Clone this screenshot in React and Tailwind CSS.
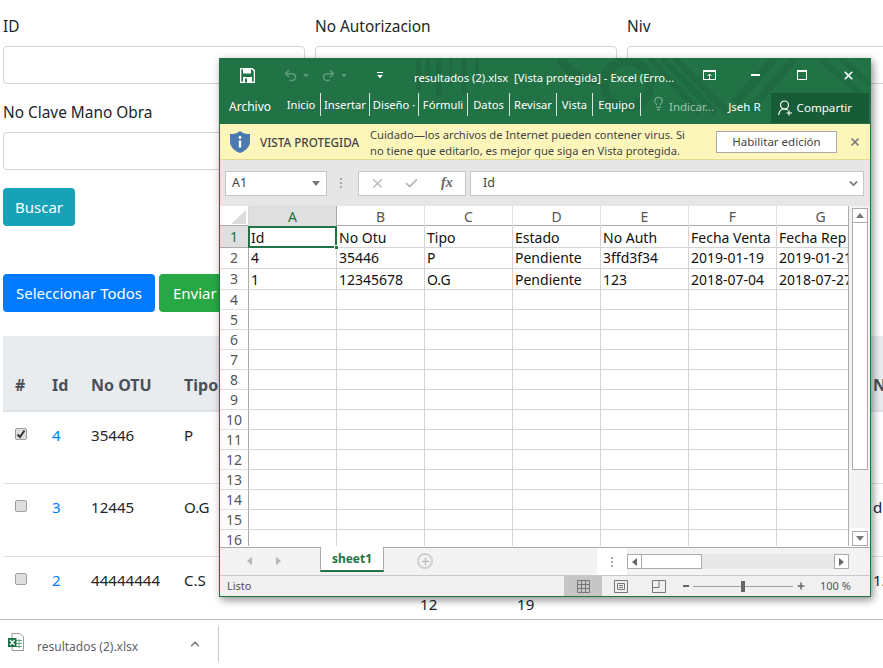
import React from "react";
import { Undo2, Redo2, Lightbulb, X, Check, ChevronUp, ChevronDown, Plus } from "lucide-react";

const cols = ["A", "B", "C", "D", "E", "F", "G"];
const sheet = [
  ["Id", "No Otu", "Tipo", "Estado", "No Auth", "Fecha Venta", "Fecha Rep"],
  ["4", "35446", "P", "Pendiente", "3ffd3f34", "2019-01-19", "2019-01-21"],
  ["1", "12345678", "O.G", "Pendiente", "123", "2018-07-04", "2018-07-27"],
];
const tabs = [
  ["Inicio", "w-[39px]"],
  ["Insertar", "w-[49px]"],
  ["Diseño ·", "w-[49px]"],
  ["Fórmuli", "w-[49px]"],
  ["Datos", "w-[42px]"],
  ["Revisar", "w-[47px]"],
  ["Vista", "w-[36px]"],
  ["Equipo", "w-[48px]"],
];
const rowNums = Array.from({ length: 16 }, (_, i) => i + 1);

function Tri({ dir = "down", className = "" }) {
  const pts = { down: "0,0 8,0 4,5", up: "0,5 8,5 4,0", left: "5,0 5,8 0,4", right: "0,0 0,8 5,4" }[dir];
  const v = dir === "down" || dir === "up";
  return (
    <svg width={v ? 8 : 5} height={v ? 5 : 8} viewBox={v ? "0 0 8 5" : "0 0 5 8"} className={className}>
      <polygon points={pts} fill="currentColor" />
    </svg>
  );
}

function Box({ checked }) {
  return (
    <span className="flex h-[12px] w-[12px] items-center justify-center rounded-[2px] border border-[#a0a0a0] bg-[#dedede]">
      {checked && (
        <svg width="10" height="10" viewBox="0 0 10 10">
          <path d="M1.5 5.5 L4 8 L8.5 1.5" fill="none" stroke="#333" strokeWidth="2" />
        </svg>
      )}
    </span>
  );
}

function TitlePattern() {
  return (
    <svg className="absolute left-0 top-0" width="650" height="66" viewBox="0 0 650 66">
      <g fill="#1f6a41">
        <rect x="196" y="0" width="5" height="32" />
        <rect x="206" y="0" width="4" height="22" />
        <rect x="216" y="0" width="6" height="38" />
        <rect x="229" y="0" width="3" height="28" />
        <rect x="241" y="0" width="6" height="36" />
        <rect x="255" y="0" width="4" height="16" />
      </g>
      <g fill="none" stroke="#1f6a41">
        <circle cx="407" cy="26" r="23" strokeWidth="9" />
        <path d="M430 0 L480 55 M442 0 L495 55 M454 0 L508 55" strokeWidth="6" />
        <path d="M555 0 L515 45 M575 0 L530 52" strokeWidth="8" />
        <path d="M600 0 L650 45 M620 0 L650 26" strokeWidth="6" />
        <path d="M340 0 Q352 22 378 22" strokeWidth="9" />
      </g>
    </svg>
  );
}

function ExcelWindow() {
  return (
    <div
      className="absolute left-[219px] top-[58px] flex h-[539px] w-[652px] flex-col overflow-hidden border-x border-b border-t-0 border-[#217346] bg-white text-[12px] text-[#444] shadow-[2px_3px_8px_rgba(0,0,0,0.45)]"
      style={{ fontFamily: '"Noto Sans", sans-serif' }}
    >
      {/* Title */}
      <div className="relative h-[66px] shrink-0 bg-[#217346] text-white">
        <TitlePattern />
        <div className="relative flex h-[34px] items-center">
          <svg className="ml-[20px]" width="15" height="15" viewBox="0 0 15 15">
            <path d="M0.5 0.5 H12 L14.5 3 V14.5 H0.5 Z" fill="none" stroke="#fff" strokeWidth="1.6" />
            <rect x="3" y="1" width="8" height="4.5" fill="#fff" />
            <rect x="3" y="9" width="9" height="5.5" fill="#fff" />
            <rect x="5" y="10.5" width="2" height="4" fill="#217346" />
          </svg>
          <Undo2 className="ml-[28px] text-[#5d9a79]" size={15} strokeWidth={2.4} />
          <Tri className="ml-[4px] scale-75 text-[#5d9a79]" />
          <Redo2 className="ml-[11px] text-[#5d9a79]" size={15} strokeWidth={2.4} />
          <Tri className="ml-[4px] scale-75 text-[#5d9a79]" />
          <span className="ml-[28px] flex flex-col items-center gap-[1px]">
            <span className="block h-[1px] w-[6px] bg-white" />
            <Tri className="scale-75 text-white" />
          </span>
          <span className="ml-[30px] mt-[5px] whitespace-pre text-[11.2px] text-white">resultados (2).xlsx  [Vista protegida] - Excel (Erro...</span>
          <svg className="ml-[29px]" width="13" height="10" viewBox="0 0 13 10">
            <rect x="0.5" y="0.5" width="12" height="9" fill="none" stroke="#fff" />
            <rect x="0.5" y="0.5" width="12" height="1.5" fill="#fff" />
            <path d="M6.5 9 V4 M4.5 6 L6.5 4 L8.5 6" fill="none" stroke="#fff" />
          </svg>
          <span className="ml-[35px] block h-[2px] w-[9px] bg-white" />
          <span className="ml-[37px] block h-[10px] w-[10px] border border-t-2 border-white" />
          <X className="ml-[35px]" size={13} strokeWidth={3} />
        </div>
        <div className="relative flex h-[32px] items-start">
          <span className="ml-[9px] mt-[3px] w-[53px] text-[12px] font-normal">Archivo</span>
          {tabs.map(([t, w]) => (
            <span key={t} className={`mt-[1px] flex h-[23px] shrink-0 items-center justify-center overflow-hidden whitespace-nowrap border-r border-[#d8e6de] text-[11.2px] ${w}`}>
              {t}
            </span>
          ))}
          <Lightbulb className="ml-[10px] mt-[4px] text-[#9fc3ae]" size={15} strokeWidth={1.4} />
          <span className="ml-[3px] mt-[3px] text-[11.5px] text-[#9fc3ae]">Indicar...</span>
          <span className="ml-[14px] mt-[3px] text-[11.5px]">Jseh R</span>
          <span className="ml-[10px] mt-[1px] flex h-[30px] w-[98px] items-center bg-[#185c37] pb-[1px]">
            <svg className="ml-[7px]" width="15" height="16" viewBox="0 0 15 16">
              <circle cx="6.5" cy="5" r="4" fill="none" stroke="#fff" strokeWidth="1.2" />
              <path d="M0.7 15 C1 11 3.5 9 6.5 9 C8 9 9 9.5 10 10" fill="none" stroke="#fff" strokeWidth="1.2" />
              <path d="M11 10.5 V15.5 M8.5 13 H14" stroke="#fff" strokeWidth="1.2" />
            </svg>
            <span className="ml-[4px] text-[11.6px]">Compartir</span>
          </span>
        </div>
      </div>

      {/* Protected view */}
      <div className="flex h-[36px] shrink-0 items-center border-b border-[#e2dc91] bg-[#fdf6bb]">
        <svg className="ml-[10px]" width="20" height="22" viewBox="0 0 20 22">
          <path d="M10 0 C13 2.5 16 3 20 3 V11 C20 16 15 20 10 22 C5 20 0 16 0 11 V3 C4 3 7 2.5 10 0 Z" fill="#4a7ab0" />
          <circle cx="10" cy="6.5" r="1.4" fill="#fff" />
          <rect x="8.8" y="9.5" width="2.4" height="7" fill="#fff" />
        </svg>
        <span className="ml-[10px] w-[110px] whitespace-nowrap text-[11.7px] font-medium text-[#444]">VISTA PROTEGIDA</span>
        <span className="mt-[2px] w-[346px] text-[11.2px] leading-[16px] text-[#444]">
          Cuidado—los archivos de Internet pueden contener virus. Si
          <br />
          no tiene que editarlo, es mejor que siga en Vista protegida.
        </span>
        <span className="flex h-[22px] w-[121px] items-center justify-center border border-[#ababab] bg-white text-[11.5px] text-[#444]">Habilitar edición</span>
        <X className="ml-[12px] text-[#777]" size={12} strokeWidth={3.2} />
      </div>

      {/* Formula bar */}
      <div className="flex h-[46px] shrink-0 items-center bg-[#e6e6e6]">
        <div className="ml-[5px] flex h-[25px] w-[102px] items-center justify-between border border-[#c6c6c6] bg-white pl-[6px] pr-[6px] text-[12.5px]">
          A1
          <Tri className="text-[#777]" />
        </div>
        <div className="ml-[13px] flex flex-col gap-[2px]">
          <span className="block h-[2px] w-[2px] bg-[#aaa]" />
          <span className="block h-[2px] w-[2px] bg-[#aaa]" />
          <span className="block h-[2px] w-[2px] bg-[#aaa]" />
        </div>
        <div className="ml-[16px] flex h-[25px] w-[108px] items-center border border-[#c6c6c6] bg-white">
          <X className="ml-[11px] text-[#b5b5b5]" size={15} strokeWidth={2} />
          <Check className="ml-[19px] text-[#b5b5b5]" size={15} strokeWidth={2.8} />
          <span className="ml-[22px] text-[14px] font-semibold italic text-[#666]" style={{ fontFamily: '"Liberation Serif", serif' }}>fx</span>
        </div>
        <div className="ml-[4px] flex h-[25px] w-[394px] items-center justify-between border border-[#c6c6c6] bg-white pl-[12px] pr-[3px] text-[12.5px]">
          Id
          <ChevronDown className="text-[#777]" size={13} strokeWidth={3} />
        </div>
      </div>

      {/* Grid + vertical scrollbar */}
      <div className="flex min-h-0 flex-1 bg-white">
        <div className="relative h-[340px] w-[629px] shrink-0 overflow-hidden border-r border-[#ababab]">
          <div className="flex h-[20px] border-b border-[#ababab]">
            <div className="flex h-[20px] w-[29px] shrink-0 items-end justify-end border-r border-[#d4d4d4] pb-[2px] pr-[2px]">
              <svg width="15" height="14" viewBox="0 0 15 14"><polygon points="15,0 15,14 0,14" fill="#dcdcdc" /></svg>
            </div>
            {cols.map((c, i) => (
              <div
                key={c}
                className={`flex h-[20px] w-[88px] shrink-0 items-center justify-center border-r pt-[1px] text-[14px] ${i === 0 ? "border-[#ababab] bg-[#dfdfdf] text-[#217346]" : "border-[#e0e0e0] text-[#555]"}`}
              >
                {c}
              </div>
            ))}
          </div>
          {rowNums.map((n) => {
            const row = sheet[n - 1];
            const h = n === 1 ? "h-[22px]" : n <= 3 ? "h-[21px]" : "h-[20px]";
            const lead = n === 1 ? "leading-[24px]" : n === 3 ? "leading-[22px]" : "leading-[20px]";
            return (
              <div key={n} className={`flex ${h}`}>
                <div className={`flex w-[29px] shrink-0 items-center justify-center border-b border-r border-[#ababab] text-[14px] ${n === 1 ? "bg-[#dfdfdf] text-[#217346]" : "border-b-[#dcdcdc] text-[#555]"}`}>
                  {n}
                </div>
                {cols.map((c, i) => (
                  <div key={c} className={`w-[88px] shrink-0 overflow-hidden whitespace-nowrap border-b border-r border-[#d4d4d4] pl-[2px] text-[14px] text-[#111] ${lead}`}>
                    {row ? row[i] : ""}
                  </div>
                ))}
              </div>
            );
          })}
          <div className="absolute left-[28px] top-[20px] h-[22px] w-[89px] border-2 border-[#217346]" />
          <div className="absolute left-[114px] top-[39px] h-[5px] w-[5px] border border-white bg-[#217346]" />
        </div>
        <div className="flex h-[340px] flex-1 flex-col bg-[#f3f3f3] pl-[3px] pt-[2px]">
          <div className="flex h-[15px] w-[16px] items-center justify-center border border-[#ababab] bg-white text-[#777]">
            <Tri dir="up" />
          </div>
          <div className="h-[247px] w-[16px] border-x border-b border-[#ababab] bg-white" />
          <div className="flex-1" />
          <div className="-ml-[3px] flex h-[18px] w-[20px] items-end justify-start bg-white pl-[3px]">
            <div className="flex h-[15px] w-[16px] items-center justify-center border border-[#ababab] bg-white text-[#777]">
              <Tri />
            </div>
          </div>
        </div>
      </div>

      {/* Sheet tabs */}
      <div className="flex h-[28px] shrink-0 items-start border-t border-[#ababab] bg-[#f3f3f3]">
        <Tri dir="left" className="ml-[27px] mt-[9px] text-[#b5b5b5]" />
        <Tri dir="right" className="ml-[24px] mt-[9px] text-[#b5b5b5]" />
        <div className="-mt-[1px] ml-[39px] flex h-[25px] w-[64px] items-center justify-center border-x border-b-2 border-x-[#ababab] border-b-[#217346] bg-white pt-[1px] text-[12px] font-bold text-[#217346]">
          sheet1
        </div>
        <span className="ml-[33px] mt-[5px] flex h-[16px] w-[16px] items-center justify-center rounded-full border-2 border-[#d0d0d0] text-[#bdbdbd]">
          <Plus size={11} strokeWidth={3} />
        </span>
        <div className="ml-[164px] flex h-[27px] w-[30px] flex-col items-center justify-center gap-[2px] self-start bg-white">
          <span className="block h-[2px] w-[2px] bg-[#aaa]" />
          <span className="block h-[2px] w-[2px] bg-[#aaa]" />
          <span className="block h-[2px] w-[2px] bg-[#aaa]" />
        </div>
        <div className="mt-[6px] flex h-[15px] w-[222px] bg-[#e8e8e8]">
          <div className="flex h-[15px] w-[15px] items-center justify-center border border-[#ababab] bg-white text-[#666]"><Tri dir="left" /></div>
          <div className="h-[15px] w-[60px] border-y border-r border-[#ababab] bg-white" />
          <div className="flex-1" />
          <div className="flex h-[15px] w-[15px] items-center justify-center border border-[#ababab] bg-white text-[#666]"><Tri dir="right" /></div>
        </div>
      </div>

      {/* Status */}
      <div className="flex h-[21px] shrink-0 items-center border-t border-[#c8c8c8] bg-[#f0f0f0] text-[11px] text-[#555]">
        <span className="ml-[7px] w-[337px]">Listo</span>
        <div className="flex h-[21px] w-[38px] items-center justify-center bg-[#c6c6c6]">
          <svg width="13" height="13" viewBox="0 0 13 13">
            <path d="M0.5 0.5 H12.5 V12.5 H0.5 Z M4.5 0.5 V12.5 M8.5 0.5 V12.5 M0.5 4.5 H12.5 M0.5 8.5 H12.5" fill="none" stroke="#777" />
          </svg>
        </div>
        <div className="flex h-[21px] w-[38px] items-center justify-center">
          <svg width="14" height="13" viewBox="0 0 14 13">
            <path d="M0.5 0.5 H13.5 V12.5 H0.5 Z M3.5 3.5 H10.5 V9.5 H3.5 Z M5 5.5 H9 M5 7.5 H9" fill="none" stroke="#777" />
          </svg>
        </div>
        <div className="flex h-[21px] w-[38px] items-center justify-center">
          <svg width="14" height="13" viewBox="0 0 14 13">
            <path d="M0.5 0.5 H13.5 V12.5 H0.5 Z M0.5 7.5 H7 V0.5" fill="none" stroke="#777" />
          </svg>
        </div>
        <span className="ml-[5px] block h-[2px] w-[6px] bg-[#666]" />
        <div className="relative ml-[4px] h-[1px] w-[100px] bg-[#a0a0a0]">
          <span className="absolute left-[48px] -top-[5px] block h-[11px] w-[4px] bg-[#666]" />
        </div>
        <Plus className="ml-[3px] text-[#666]" size={10} strokeWidth={3.5} />
        <span className="ml-[14px] text-[11px]">100 %</span>
      </div>
    </div>
  );
}

const th = "border-b-2 border-[#dee2e6] px-3 pt-3 pb-[13px] text-left align-bottom text-[16px] font-bold text-[#495057]";
const td = "border-b border-[#dee2e6] px-3 pt-[11px] pb-3 align-top text-[15.1px]";

export default function App() {
  const rows = [
    { id: 4, otu: "35446", tipo: "P", checked: true, a: "", b: "", n: "", h: "h-[72px]" },
    { id: 3, otu: "12445", tipo: "O.G", a: "", b: "", n: "d", h: "h-[73px]" },
    { id: 2, otu: "44444444", tipo: "C.S", a: <>2019-02-<br />12</>, b: <>2019-02-<br />19</>, n: "1234", h: "h-[72px]" },
  ];
  return (
    <div className="relative h-[668px] w-[883px] overflow-hidden bg-white text-[16px] leading-[24px] text-[#212529]" style={{ fontFamily: '"Noto Sans", sans-serif' }}>
      <div className="h-[619px] overflow-hidden pl-[3px] pt-[15px]">
        <div className="grid w-[926px] grid-cols-3 gap-x-[10px]">
          {["ID", "No Autorizacion", "Niv", "No Clave Mano Obra"].map((l) => (
            <div key={l} className="mb-[16px] h-[70px]">
              <label className="mb-[7px] block h-[24px] text-[15.4px]">{l}</label>
              <div className="h-[38px] rounded-[4px] border border-[#ced4da] bg-white" />
            </div>
          ))}
        </div>
        <button className="mt-[1px] block h-[38px] w-[72px] rounded-[4px] bg-[#17a2b8] text-[15px] text-white">Buscar</button>
        <div className="mt-[48px] flex gap-[4px]">
          <button className="h-[38px] w-[152px] rounded-[4px] bg-[#007bff] text-[15px] text-white">Seleccionar Todos</button>
          <button className="h-[38px] w-[100px] rounded-[4px] bg-[#28a745] pl-[14px] text-left text-[15px] text-white">Enviar</button>
        </div>
        <table className="mt-[24px] w-[1000px] table-fixed border-collapse">
          <colgroup>
            <col className="w-[37px]" />
            <col className="w-[39px]" />
            <col className="w-[93px]" />
            <col className="w-[236px]" />
            <col className="w-[97px]" />
            <col className="w-[356px]" />
            <col className="w-[142px]" />
          </colgroup>
          <thead>
            <tr className="h-[75px] bg-[#e9ecef]">
              <th className={th}>#</th>
              <th className={th}>Id</th>
              <th className={th}>No OTU</th>
              <th className={th}>Tipo</th>
              <th className={th}>Venta</th>
              <th className={th}>Rep</th>
              <th className={th}>No</th>
            </tr>
          </thead>
          <tbody>
            {rows.map((r) => (
              <tr key={r.id} className={r.h}>
                <td className={td}><span className="mt-[5px] block"><Box checked={r.checked} /></span></td>
                <td className={`${td} text-[#007bff]`}>{r.id}</td>
                <td className={td}>{r.otu}</td>
                <td className={td}>{r.tipo}</td>
                <td className={td}>{r.a}</td>
                <td className={td}>{r.b}</td>
                <td className={td}>{r.n}</td>
              </tr>
            ))}
          </tbody>
        </table>
      </div>

      {/* Download bar */}
      <div className="flex h-[49px] items-center border-t border-[#b9b9b9] bg-white">
        <svg className="ml-[8px] mt-[-4px]" width="16" height="18" viewBox="0 0 16 18">
          <path d="M4 0.5 H12 L15.5 4 V17.5 H4 Z" fill="#fff" stroke="#999" />
          <path d="M8 7.5 H14 M8 10.5 H14 M8 13.5 H14 M11 6 V15" stroke="#6aa583" />
          <rect x="0" y="5" width="8.5" height="9" fill="#1f7246" />
          <path d="M2 7 L6.5 12 M6.5 7 L2 12" stroke="#fff" strokeWidth="1.3" />
        </svg>
        <span className="ml-[13px] mt-[5px] w-[150px] text-[12px] text-[#5f6368]">resultados (2).xlsx</span>
        <ChevronUp className="ml-[1px] text-[#777]" size={14} strokeWidth={2.5} />
        <span className="ml-[16px] block h-[36px] w-[1px] bg-[#ccc]" />
      </div>

      <ExcelWindow />
    </div>
  );
}
